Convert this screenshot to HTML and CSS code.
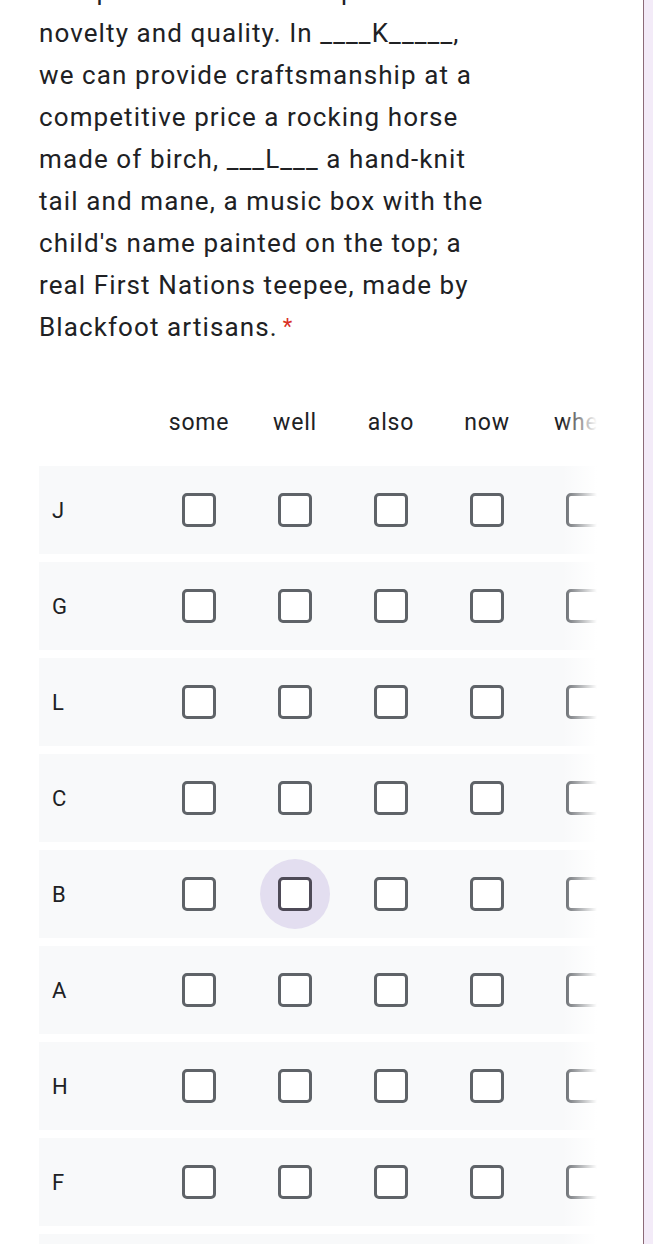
FILE: index.html
```html
<!DOCTYPE html>
<html>
<head>
<meta charset="utf-8">
<link rel="stylesheet" href="styles.css">
</head>
<body>
<div class="card">
  <div class="question">
    <div class="qtext">true products that mix up the finest<br>novelty and quality. In ____K_____,<br>we can provide craftsmanship at a<br>competitive price a rocking horse<br>made of birch, ___L___ a hand-knit<br>tail and mane, a music box with the<br>child's name painted on the top; a<br>real First Nations teepee, made by<br>Blackfoot artisans.<span class="req">*</span></div>
  </div>
  <div class="grid">
    <div class="row head">
      <div class="label"></div>
      <div class="cell">some</div>
      <div class="cell">well</div>
      <div class="cell">also</div>
      <div class="cell">now</div>
      <div class="cell">when</div>
    </div>
    <div class="row body"><div class="label">J</div><div class="cell"><span class="hit"><span class="box"></span></span></div><div class="cell"><span class="hit"><span class="box"></span></span></div><div class="cell"><span class="hit"><span class="box"></span></span></div><div class="cell"><span class="hit"><span class="box"></span></span></div><div class="cell"><span class="hit"><span class="box"></span></span></div></div>
    <div class="row body"><div class="label">G</div><div class="cell"><span class="hit"><span class="box"></span></span></div><div class="cell"><span class="hit"><span class="box"></span></span></div><div class="cell"><span class="hit"><span class="box"></span></span></div><div class="cell"><span class="hit"><span class="box"></span></span></div><div class="cell"><span class="hit"><span class="box"></span></span></div></div>
    <div class="row body"><div class="label">L</div><div class="cell"><span class="hit"><span class="box"></span></span></div><div class="cell"><span class="hit"><span class="box"></span></span></div><div class="cell"><span class="hit"><span class="box"></span></span></div><div class="cell"><span class="hit"><span class="box"></span></span></div><div class="cell"><span class="hit"><span class="box"></span></span></div></div>
    <div class="row body"><div class="label">C</div><div class="cell"><span class="hit"><span class="box"></span></span></div><div class="cell"><span class="hit"><span class="box"></span></span></div><div class="cell"><span class="hit"><span class="box"></span></span></div><div class="cell"><span class="hit"><span class="box"></span></span></div><div class="cell"><span class="hit"><span class="box"></span></span></div></div>
    <div class="row body"><div class="label">B</div><div class="cell"><span class="hit"><span class="box"></span></span></div><div class="cell"><span class="hit focus"><span class="box"></span></span></div><div class="cell"><span class="hit"><span class="box"></span></span></div><div class="cell"><span class="hit"><span class="box"></span></span></div><div class="cell"><span class="hit"><span class="box"></span></span></div></div>
    <div class="row body"><div class="label">A</div><div class="cell"><span class="hit"><span class="box"></span></span></div><div class="cell"><span class="hit"><span class="box"></span></span></div><div class="cell"><span class="hit"><span class="box"></span></span></div><div class="cell"><span class="hit"><span class="box"></span></span></div><div class="cell"><span class="hit"><span class="box"></span></span></div></div>
    <div class="row body"><div class="label">H</div><div class="cell"><span class="hit"><span class="box"></span></span></div><div class="cell"><span class="hit"><span class="box"></span></span></div><div class="cell"><span class="hit"><span class="box"></span></span></div><div class="cell"><span class="hit"><span class="box"></span></span></div><div class="cell"><span class="hit"><span class="box"></span></span></div></div>
    <div class="row body"><div class="label">F</div><div class="cell"><span class="hit"><span class="box"></span></span></div><div class="cell"><span class="hit"><span class="box"></span></span></div><div class="cell"><span class="hit"><span class="box"></span></span></div><div class="cell"><span class="hit"><span class="box"></span></span></div><div class="cell"><span class="hit"><span class="box"></span></span></div></div>
    <div class="row body"><div class="label">D</div><div class="cell"><span class="hit"><span class="box"></span></span></div><div class="cell"><span class="hit"><span class="box"></span></span></div><div class="cell"><span class="hit"><span class="box"></span></span></div><div class="cell"><span class="hit"><span class="box"></span></span></div><div class="cell"><span class="hit"><span class="box"></span></span></div></div>
  </div>
</div>
</body>
</html>
```
FILE: styles.css
```css
html, body {
  margin: 0;
  padding: 0;
}
body {
  background: #f3ebf8;
  height: 1244px;
  overflow: hidden;
  font-family: Roboto, "Liberation Sans", sans-serif;
  color: #202124;
}
.card {
  width: 644px;
  min-height: 1400px;
  background: #fff;
  border-right: 1px solid #8c6a78;
  padding-left: 39px;
  box-sizing: border-box;
}
.question {
  margin-top: -30px;
}
.qtext {
  font-size: 26px;
  line-height: 42px;
  letter-spacing: 1.1px;
}
.req {
  color: #d93025;
  margin-left: 5px;
  font-size: 22px;
  vertical-align: 2px;
}
.grid {
  margin-top: 30px;
  width: 561px;
  overflow: hidden;
  position: relative;
}
.grid::after {
  content: "";
  position: absolute;
  top: 0;
  right: 0;
  bottom: 0;
  width: 38px;
  background: linear-gradient(to right, rgba(255,255,255,0), #fff 92%);
}
.row {
  display: flex;
  width: 592px;
}
.head {
  height: 88px;
  align-items: center;
  font-size: 23px;
  letter-spacing: 0.8px;
}
.body {
  height: 88px;
  margin-bottom: 8px;
  background: #f8f9fa;
  align-items: center;
}
.label {
  width: 112px;
  flex: none;
  box-sizing: border-box;
  padding-left: 13px;
  font-size: 22px;
}
.cell {
  width: 96px;
  flex: none;
  display: flex;
  justify-content: center;
  align-items: center;
}
.hit {
  width: 70px;
  height: 70px;
  border-radius: 50%;
  display: flex;
  justify-content: center;
  align-items: center;
}
.hit.focus {
  background: #e3def0;
}
.box {
  width: 34px;
  height: 34px;
  box-sizing: border-box;
  border: 3.5px solid #5f6368;
  border-radius: 5px;
  background: #fff;
}
.focus .box {
  border-color: #4e4a57;
}
```
